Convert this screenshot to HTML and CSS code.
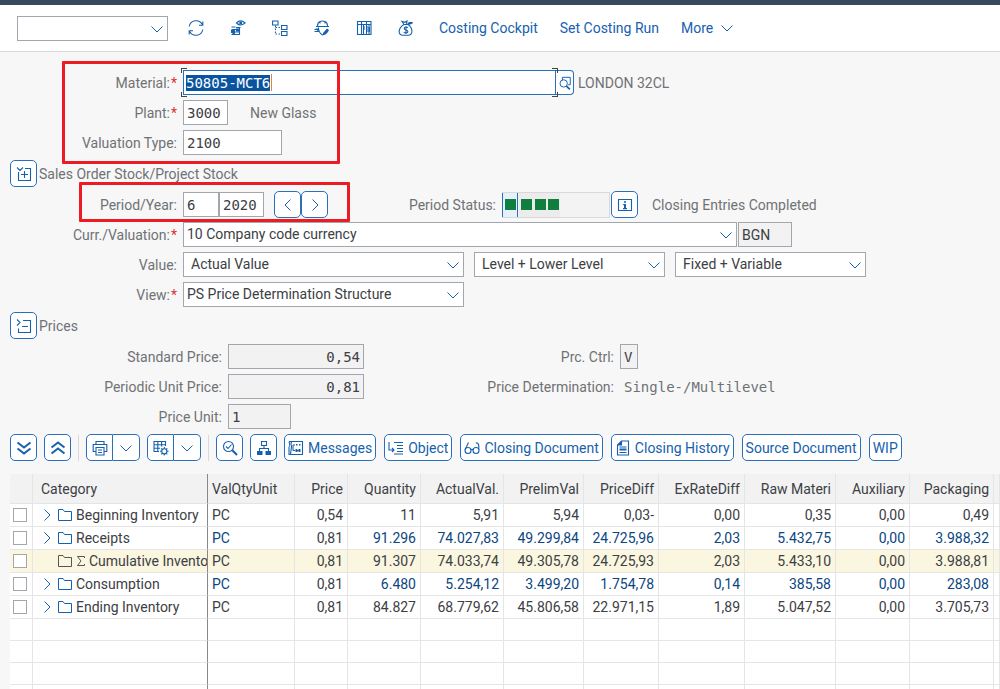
FILE: index.html
```html
<!DOCTYPE html>
<html lang="en">
<head>
<meta charset="utf-8">
<title>Material Price Analysis</title>
<link rel="stylesheet" href="styles.css">
</head>
<body>
<svg class="sprite" aria-hidden="true">
  <symbol id="down" viewBox="0 0 14 8"><path d="M1.5 1.5 7 7l5.500-5.500"/></symbol>
  <symbol id="right" viewBox="0 0 8 14"><path d="M1.500 1.500 7 7l-5.500 5.500"/></symbol>
  <symbol id="folder" viewBox="0 0 16 14"><path d="M1.500 12.500v-11h4.500l1.500 2h7v9z"/></symbol>
</svg>
<div class="shell"></div>
<header class="toolbar">
  <span class="pick command"><select aria-label="Command"><option></option></select><svg class="chev"><use href="#down"/></svg></span>
  <div class="tools">
    <button class="tool" aria-label="Refresh"><svg class="ico" viewBox="0 0 16 16"><path d="M1.200 6.500A7 7 0 0 1 14.300 4.500M14.800 9.500A7 7 0 0 1 1.700 11.500M14.800 1.500v3.800H11M1.200 14.500v-3.800H5"/></svg></button>
    <button class="tool" aria-label="Display costs"><svg class="ico" viewBox="0 0 16 16"><path d="M6.500 3Q10.500-1.200 15 3 10.500 7 6.500 3zM1.500 7h4M1.500 9.500h8M1.500 12h8M1.500 14.500h8M7 7.500h3.500M9.500 8v7"/><circle class="solid" cx="10.700" cy="3" r="1.500"/><path class="solid" d="M1 10h4v3H1zM2.500 13H5v2H2.500zM6 7h4v1.500H6zM6 10h3v1.500H6z"/></svg></button>
    <button class="tool" aria-label="Structure"><svg class="ico" viewBox="0 0 16 16"><path d="M.6 1h5.400v4H.6zM9.500 5.500h5.500v4H9.500zM9.500 11.500h5.500v4H9.500z"/><path class="dots" d="M3.500 5.500v9M3.500 7.500H9M3.500 14H9"/></svg></button>
    <button class="tool" aria-label="Worker"><svg class="ico" viewBox="0 0 16 16"><path d="M3.500 6q0-3.500 2.500-4.500 2.500-1 5 0 2.500 1 2.500 4.500M6 3.500v-2M11 3.500v-2M2 6.500h13M4.500 7.500v1Q5 13 8.500 15q2.500-1 4-3.500M.5 9.500h4M.5 11.500h4"/><path class="solid" d="m9 13 4-4.500 2 1.500-1 2-2.500 2.500-2.500.5zM1.500 8.500H4l1 3H4z"/></svg></button>
    <button class="tool" aria-label="Ledger"><svg class="ico" viewBox="0 0 16 16"><path d="M1.500 1.500h13.500v13H1.500zM1.500 4.500h13.500M5.500 2v12.500M10.500 2v12.500M7.500 4.500v10M13 4.500v10"/><path class="solid" d="M7 6h1.500v4H7zM10 6h1.500v6H10zM12.500 7H14v5h-1.500z"/></svg></button>
    <button class="tool" aria-label="Money"><svg class="ico" viewBox="0 0 16 16"><path d="M6 4.500C0 8-.5 15.200 5 15.200h5C15.500 15.200 15 8 10 4.500zM6 4.500 4 1.500l3 .8L9 1l-.5 3.500M10 7.600Q9.300 7 8 7 6.200 7 6.200 8.400 6.200 9.600 8 10t1.900 1.500Q9.900 13 8 13q-1.500 0-2.200-.8M8 6.200v7.800"/><path class="solid" d="m9.500 3 2-1H15l-1 2-4 1z"/></svg></button>
  </div>
  <nav class="links">
    <a href="#cockpit">Costing Cockpit</a>
    <a href="#run">Set Costing Run</a>
    <a href="#more" class="more">More <svg class="chev-in"><use href="#down"/></svg></a>
  </nav>
</header>

<main>
  <div class="mark mark-material"></div>
  <div class="mark mark-period"></div>
  <form class="form">
    <div class="row">
      <label class="label" for="material">Material:<i>*</i></label>
      <span class="focus"><input id="material" class="field material" value="50805-MCT6"><b class="caret"></b></span><button type="button" class="help" aria-label="Value help"><svg class="ico" viewBox="0 0 16 16"><path d="M5 4.500V1.500h9V10h-2.500"/><circle cx="6.500" cy="8.500" r="4.200"/><path class="thick" d="m9.700 11.500 3.800 3.800"/></svg></button>
      <span class="text after">LONDON 32CL</span>
    </div>
    <div class="row">
      <label class="label" for="plant">Plant:<i>*</i></label>
      <input id="plant" class="field w-plant" value="3000">
      <span class="text plant-name">New Glass</span>
    </div>
    <div class="row">
      <label class="label" for="valtype">Valuation Type:</label>
      <input id="valtype" class="field w-type" value="2100">
    </div>
    <div class="section">
      <button type="button" class="btn square" aria-label="Expand"><svg class="ico" viewBox="0 0 16 16"><path d="M1 1.500 4 4.500 7 1.500M9 2.500h5.500v12h-12V6M8.500 5v7M5 8.500h7"/></svg></button>
      <span class="text">Sales Order Stock/Project Stock</span>
    </div>
    <div class="row">
      <label class="label" for="period">Period/Year:</label>
      <input id="period" class="field w-period" value="6">
      <input class="field w-year" aria-label="Year" value="2020">
      <span class="stepper">
        <button type="button" class="btn square" aria-label="Previous"><svg class="arrow flip"><use href="#right"/></svg></button>
        <button type="button" class="btn square" aria-label="Next"><svg class="arrow"><use href="#right"/></svg></button>
      </span>
      <span class="text status-label">Period Status:</span>
      <span class="status"><b></b><b></b><b></b><b></b></span>
      <button type="button" class="btn square" aria-label="Information"><svg class="ico" viewBox="0 0 16 16"><path d="M1.500 2.500h13v11h-13z"/><path class="solid" d="M7 4.200h2v1.600H7zM6.200 7H9v4h1v1.200H6V11h1V8.200h-.8z"/></svg></button>
      <span class="text status-text">Closing Entries Completed</span>
    </div>
    <div class="row">
      <label class="label" for="curr">Curr./Valuation:<i>*</i></label>
      <span class="pick w-curr"><select id="curr"><option>10 Company code currency</option></select><svg class="chev"><use href="#down"/></svg></span>
      <input class="field ro w-bgn" aria-label="Currency" value="BGN" readonly>
    </div>
    <div class="row">
      <label class="label" for="value">Value:</label>
      <span class="pick w-value indent"><select id="value"><option>Actual Value</option></select><svg class="chev"><use href="#down"/></svg></span>
      <span class="pick w-level indent"><select aria-label="Level"><option>Level + Lower Level</option></select><svg class="chev"><use href="#down"/></svg></span>
      <span class="pick w-level indent"><select aria-label="Portion"><option>Fixed + Variable</option></select><svg class="chev"><use href="#down"/></svg></span>
    </div>
    <div class="row">
      <label class="label" for="view">View:<i>*</i></label>
      <span class="pick w-value"><select id="view"><option>PS Price Determination Structure</option></select><svg class="chev"><use href="#down"/></svg></span>
    </div>
    <div class="section">
      <button type="button" class="btn square" aria-label="Collapse"><svg class="ico" viewBox="0 0 16 16"><path d="m1 1.500 3 3-3 3M7 2.500h7.500v12h-12v-4M6 8.500h6"/></svg></button>
      <span class="text">Prices</span>
    </div>
    <div class="row">
      <label class="label wide" for="std">Standard Price:</label>
      <input id="std" class="field ro num" value="0,54" readonly>
      <label class="label right" for="ctrl">Prc. Ctrl:</label>
      <input id="ctrl" class="field ro w-ctrl" value="V" readonly>
    </div>
    <div class="row">
      <label class="label wide" for="per">Periodic Unit Price:</label>
      <input id="per" class="field ro num" value="0,81" readonly>
      <span class="label right">Price Determination:</span>
      <span class="mono">Single-/Multilevel</span>
    </div>
    <div class="row">
      <label class="label wide" for="unit">Price Unit:</label>
      <input id="unit" class="field ro w-unit" value="1" readonly>
    </div>
  </form>

  <div class="actions">
    <button class="btn square" aria-label="Expand all"><svg class="ico bold" viewBox="0 0 16 16"><path d="m1.500 2.500 6.500 5 6.500-5M1.500 8.500l6.500 5 6.500-5"/></svg></button>
    <button class="btn square" aria-label="Collapse all"><svg class="ico bold" viewBox="0 0 16 16"><path d="m1.500 7.500 6.500-5 6.500 5M1.500 13.500l6.500-5 6.500 5"/></svg></button>
    <span class="sep"></span>
    <span class="split">
      <button class="btn square" aria-label="Print"><svg class="ico" viewBox="0 0 16 16"><path d="M4 4.500v-3h8v3M4 11.500H1.200v-7h13.600v7H12M4 7.500h8v7.500H4zM6 10h4M6 12.500h4"/></svg></button><button class="btn square" aria-label="Print options"><svg class="chev-in"><use href="#down"/></svg></button>
    </span>
    <span class="split">
      <button class="btn square" aria-label="Layout"><svg class="ico" viewBox="0 0 16 16"><path d="M6 11.500H1v-10h11.500V6M1 4.800h11.500M1 8.200h6M4.800 1.500v10M8.600 1.500v5"/><circle cx="11.300" cy="11.300" r="2.600"/><path d="M11.300 7v1.700M11.300 13.900v1.700M7 11.300h1.700M13.900 11.300h1.700M8.300 8.300l1.200 1.200M13.100 13.100l1.200 1.200M8.300 14.300l1.200-1.200M13.100 9.500l1.200-1.200"/></svg></button><button class="btn square" aria-label="Layout options"><svg class="chev-in"><use href="#down"/></svg></button>
    </span>
    <span class="sep"></span>
    <button class="btn square" aria-label="Details"><svg class="ico" viewBox="0 0 16 16"><circle cx="6.500" cy="6.500" r="5"/><path d="m4 6.500 2 2 3.500-4"/><path class="thick" d="m10.300 10.300 4.700 4.700"/></svg></button>
    <button class="btn square" aria-label="Hierarchy"><svg class="ico" viewBox="0 0 16 16"><path d="M5.500 1.500h5v4h-5zM8 5.500v3M3.500 11V8.500h9V11"/><path class="solid" d="M1 11h5.500v4H1zM9.500 11H15v4H9.500z"/></svg></button>
    <div class="commands">
      <button class="btn"><svg class="ico" viewBox="0 0 16 16"><path d="M1 1.500h2.500q-1 2.500 0 5l-1 8M1 1.500q1.500 3 0 6v7h13.500v-13H3M5 5h2M5 5v5.500M5 10.500h2"/><path class="solid" d="M8 4h1.500v1.500H8zM11 4h1.500v1.500H11zM7.500 9H9l1 1.200L11 9h1.500v3H11l-1-1-1 1H7.500z"/></svg>Messages</button>
      <button class="btn"><svg class="ico" viewBox="0 0 16 16"><path d="M1 2v8h5M4 8l2 2-2 2M6 2.500h9M9 5.500h6M9 8.500h6M9 11.500h6M6 14h9"/></svg>Object</button>
      <button class="btn"><svg class="ico" viewBox="0 0 16 16"><circle cx="4" cy="10.500" r="3"/><circle cx="12" cy="10.500" r="3"/><path d="M7 9.800q1-.8 2 0M1.200 9.500 4.500 2.500M14.800 9.500V6q0-3-3-3.200"/></svg>Closing Document</button>
      <button class="btn"><svg class="ico" viewBox="0 0 16 16"><path d="M6.500 1H13.500v14H2.500V5zM6.500 1v4h-4M4.500 7h7M4.500 12.500h7"/><path class="solid" d="m2.500 5 4-4v4zM4.500 8.500h7v2h-7z"/></svg>Closing History</button>
      <button class="btn">Source Document</button>
      <button class="btn">WIP</button>
    </div>
  </div>

  <table class="grid">
    <colgroup><col class="c-check"><col class="c-cat"><col class="c-unit"><col class="c-price"><col class="c-qty"><col class="c-act"><col class="c-prel"><col class="c-diff"><col class="c-rate"><col class="c-raw"><col class="c-aux"><col class="c-pack"><col></colgroup>
    <thead><tr><th></th><th class="cat">Category</th><th class="unit">ValQtyUnit</th><th>Price</th><th>Quantity</th><th>ActualVal.</th><th>PrelimVal</th><th>PriceDiff</th><th>ExRateDiff</th><th>Raw Materi</th><th>Auxiliary</th><th>Packaging</th><th></th></tr></thead>
    <tbody>
      <tr><td class="check"><input type="checkbox" aria-label="Beginning Inventory"></td><td class="cat"><div class="node"><svg class="arrow"><use href="#right"/></svg><svg class="folder"><use href="#folder"/></svg>Beginning Inventory</div></td><td class="unit">PC</td><td>0,54</td><td>11</td><td>5,91</td><td>5,94</td><td>0,03-</td><td>0,00</td><td>0,35</td><td>0,00</td><td>0,49</td><td></td></tr>
      <tr class="blue"><td class="check"><input type="checkbox" aria-label="Receipts"></td><td class="cat"><div class="node"><svg class="arrow"><use href="#right"/></svg><svg class="folder"><use href="#folder"/></svg>Receipts</div></td><td class="unit">PC</td><td class="plain">0,81</td><td>91.296</td><td>74.027,83</td><td>49.299,84</td><td>24.725,96</td><td>2,03</td><td>5.432,75</td><td>0,00</td><td>3.988,32</td><td></td></tr>
      <tr class="total"><td class="check"><input type="checkbox" aria-label="Cumulative Inventory"></td><td class="cat"><div class="node leaf"><svg class="folder"><use href="#folder"/></svg><svg class="sum" viewBox="0 0 10 12"><path d="M8.500 3V1.500H1.500L5 6l-3.500 4.500h7V9"/></svg>Cumulative Invento</div></td><td class="unit">PC</td><td>0,81</td><td>91.307</td><td>74.033,74</td><td>49.305,78</td><td>24.725,93</td><td>2,03</td><td>5.433,10</td><td>0,00</td><td>3.988,81</td><td></td></tr>
      <tr class="blue"><td class="check"><input type="checkbox" aria-label="Consumption"></td><td class="cat"><div class="node"><svg class="arrow"><use href="#right"/></svg><svg class="folder"><use href="#folder"/></svg>Consumption</div></td><td class="unit">PC</td><td class="plain">0,81</td><td>6.480</td><td>5.254,12</td><td>3.499,20</td><td>1.754,78</td><td>0,14</td><td>385,58</td><td>0,00</td><td>283,08</td><td></td></tr>
      <tr><td class="check"><input type="checkbox" aria-label="Ending Inventory"></td><td class="cat"><div class="node"><svg class="arrow"><use href="#right"/></svg><svg class="folder"><use href="#folder"/></svg>Ending Inventory</div></td><td class="unit">PC</td><td>0,81</td><td>84.827</td><td>68.779,62</td><td>45.806,58</td><td>22.971,15</td><td>1,89</td><td>5.047,52</td><td>0,00</td><td>3.705,73</td><td></td></tr>
      <tr class="empty"><td></td><td class="cat"></td><td></td><td></td><td></td><td></td><td></td><td></td><td></td><td></td><td></td><td></td><td></td></tr>
      <tr class="empty"><td></td><td class="cat"></td><td></td><td></td><td></td><td></td><td></td><td></td><td></td><td></td><td></td><td></td><td></td></tr>
      <tr class="empty"><td></td><td class="cat"></td><td></td><td></td><td></td><td></td><td></td><td></td><td></td><td></td><td></td><td></td><td></td></tr>
      <tr class="empty"><td></td><td class="cat"></td><td></td><td></td><td></td><td></td><td></td><td></td><td></td><td></td><td></td><td></td><td></td></tr>
    </tbody>
  </table>
</main>
<script src="page.js"></script>
</body>
</html>
```
FILE: styles.css
```css
* { box-sizing: border-box; }
html { height: 100%; overflow: hidden; }
body {
  margin: 0;
  height: 100%;
  overflow: hidden;
  background: #f7f7f7;
  color: #3c4044;
  font: 14px/18px Roboto, "Liberation Sans", sans-serif;
}
.sprite { position: absolute; width: 0; height: 0; }
svg { fill: none; stroke: #1661ad; stroke-width: 1; flex: none; display: block; }
.solid { fill: #1661ad; stroke: none; }
.thick { stroke-width: 2; }
.ico.bold { stroke-width: 2; }
.dots { stroke-dasharray: 1.5 1.5; }
.ico { width: 16px; height: 16px; stroke-width: 1.1; }
button, input, select { font: inherit; color: inherit; margin: 0; }

.shell { height: 5px; background: #354a5f; }
.toolbar {
  display: flex;
  align-items: center;
  height: 47px;
  padding: 0 17px;
  background: #fff;
  border-bottom: 1px solid #d9d9d9;
}
.tools { display: flex; gap: 20px; margin-left: 17px; }
.tool { display: grid; place-items: center; width: 22px; height: 24px; padding: 0; border: 0; background: none; }
.links { display: flex; gap: 22px; margin-left: 22px; }
.links a { color: #1661ad; text-decoration: none; white-space: nowrap; }
.links .more { display: flex; align-items: center; gap: 7px; }
.chev-in { width: 14px; height: 8px; }

main { position: relative; padding: 18px 0 0 10px; }
.form { display: flex; flex-direction: column; gap: 5px; }
.row, .section { display: flex; align-items: center; white-space: nowrap; }
.row { height: 25px; }
.section { height: 27px; gap: 2px; }
.label { width: 167px; margin-right: 6px; text-align: right; color: #6f7275; flex: none; }
.label.wide { width: 212px; }
.label.right { width: 250px; }
.label i { color: #d33; font-style: normal; margin-left: 1px; }
.text { color: #6f7275; }
.field {
  height: 25px;
  padding: 0 3px;
  border: 1px solid #a2a7ad;
  border-radius: 0;
  background: #fff;
  color: #3c4044;
  font: 14px/18px "DejaVu Sans Mono", monospace;
  outline: 0;
}
.ro { background: #f2f2f2; }
.num { width: 136px; text-align: right; }
.focus { position: relative; display: flex; }
.focus::before, .focus::after {
  content: "";
  position: absolute;
  top: -2px;
  bottom: -2px;
  width: 5px;
  border: solid #444;
  clip-path: polygon(0 0, 100% 0, 100% 5px, 0 5px, 0 calc(100% - 5px), 100% calc(100% - 5px), 100% 100%, 0 100%);
}
.focus::before { left: -2px; border-width: 1px 0 1px 1px; }
.focus::after { right: -2px; border-width: 1px 1px 1px 0; }
.material { width: 373px; padding: 0 2px; border-color: #2a6fba; }
.material::selection { background: #0854a0; color: #fff; }
.caret { position: absolute; left: 88px; top: 4px; width: 1px; height: 17px; background: #d58a3c; }
.help { display: grid; place-items: center; width: 18px; height: 25px; padding: 0; border: 1px solid #2a6fba; border-left: 0; border-radius: 0 4px 4px 0; background: #fff; }
.help .ico { width: 14px; height: 14px; }
.after { margin-left: 4px; }
.w-plant { width: 45px; }
.plant-name { margin-left: 22px; }
.w-type { width: 99px; }
.w-period { width: 36px; }
.w-year { width: 45px; }
.stepper { display: flex; margin-left: 10px; }
.status-label { width: 168px; margin-right: 6px; text-align: right; }
.status {
  display: flex;
  width: 108px;
  height: 26px;
  margin-right: 1px;
  border: 1px solid #d9d9d9;
  background: #f3f3f3;
}
.status b { display: grid; place-items: center; width: 13px; background: #ececec; }
.status b::before { content: ""; width: 11px; height: 11px; background: #107e3e; }
.status b:first-child { width: 16px; margin: 0 1px 0 -1px; background: #e5f0fa; border: solid #2a6fba; border-width: 0 1px; }
.status b:nth-child(2) { width: 15px; }
.status-text { margin-left: 14px; }
.pick { position: relative; display: flex; height: 25px; }
.pick select {
  width: 100%;
  padding: 0 24px 2px 3px;
  border: 1px solid #a2a7ad;
  border-radius: 0;
  background: #fff;
  appearance: none;
}
.pick .chev { position: absolute; right: 4px; top: 9px; width: 14px; height: 8px; pointer-events: none; }
.pick.indent select { padding-left: 7px; }
.command { width: 151px; }
.w-curr { width: 554px; margin-right: 1px; }
.w-bgn { width: 54px; font-family: Roboto, sans-serif; }
.w-value { width: 281px; }
.w-level { width: 191px; margin-left: 10px; }
.w-ctrl { width: 18px; }
.w-unit { width: 63px; }
.mono { margin-left: 4px; color: #6f7275; font: 14px/18px "DejaVu Sans Mono", monospace; }

.btn {
  display: flex;
  align-items: center;
  justify-content: center;
  gap: 4px;
  flex: none;
  height: 27px;
  min-width: 27px;
  padding: 0 3px;
  border: 1px solid #2a6fba;
  border-radius: 5px;
  background: #fff;
  color: #1661ad;
  white-space: nowrap;
}
.square { width: 27px; padding: 0; }
.arrow { width: 8px; height: 14px; }
.flip { transform: scaleX(-1); }

.actions { display: flex; align-items: center; gap: 7px; margin-top: 5px; }
.commands { display: flex; gap: 8px; }
.split { display: flex; }
.split .btn:first-child { border-radius: 5px 0 0 5px; }
.split .btn:last-child { border-left: 0; border-radius: 0 5px 5px 0; }
.sep { width: 1px; height: 26px; background: #d9d9d9; }

.grid { width: 100%; margin-top: 13px; table-layout: fixed; border-collapse: separate; border-spacing: 0; background: #fff; }
.c-check { width: 23px; }
.c-cat { width: 175px; }
.c-unit { width: 87px; }
.c-price { width: 53px; }
.c-qty { width: 73px; }
.c-act { width: 83px; }
.c-prel { width: 80px; }
.c-diff { width: 75px; }
.c-rate { width: 86px; }
.c-raw { width: 91px; }
.c-aux { width: 74px; }
.c-pack { width: 84px; }
.grid th, .grid td {
  height: 23px;
  padding: 0 4px;
  overflow: hidden;
  border: solid #e5e5e5;
  border-width: 0 1px 1px 0;
  font-weight: 400;
  text-align: right;
  white-space: nowrap;
}
.grid th { height: 30px; background: #f2f2f2; }
.grid .cat { padding: 0 0 0 8px; border-right-color: #888; text-align: left; }
.grid .unit { text-align: left; }
.grid .check { padding: 0; }
.grid .empty td { height: 22px; }
.check input {
  display: block;
  width: 14px;
  height: 14px;
  margin: 0 auto 0 3px;
  appearance: none;
  border: 1px solid #a2a7ad;
  background: #fff;
}
.blue td { color: #0b4680; }
.blue .cat, .blue .plain { color: #3c4044; }
.total td { background: #faf6e0; }
.node { display: flex; align-items: center; height: 22px; margin-left: 2px; overflow: hidden; }
.node .arrow { margin-right: 6px; }
.node .folder { width: 16px; height: 14px; margin-right: 3px; }
.leaf { padding-left: 14px; }
.leaf svg { stroke: #555; }
.sum { width: 10px; height: 12px; margin-right: 3px; }

.mark { position: absolute; z-index: 2; border: 3px solid #ed1c24; border-radius: 1px; pointer-events: none; }
.mark-material { left: 62px; top: 9px; width: 278px; height: 103px; }
.mark-period { left: 79px; top: 130px; width: 271px; height: 40px; }
```
FILE: page.js
```js
const material = document.getElementById("material");
material.focus();
material.select();
```
